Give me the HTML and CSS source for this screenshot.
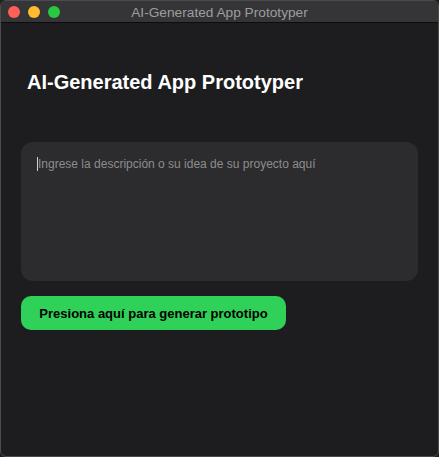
FILE: index.html
```html
<!DOCTYPE html>
<html>
<head>
<meta charset="utf-8">
<link rel="stylesheet" href="styles.css">
</head>
<body>
<div class="window">
  <div class="titlebar">
    <div class="lights">
      <span class="light red"></span>
      <span class="light yellow"></span>
      <span class="light green"></span>
    </div>
    <div class="title">AI-Generated App Prototyper</div>
  </div>
  <div class="content">
    <h1 class="heading">AI-Generated App Prototyper</h1>
    <div class="inputbox">
      <div class="placeholder"><span class="caret"></span>Ingrese la descripción o su idea de su proyecto aquí</div>
    </div>
    <button class="generate">Presiona aquí para generar prototipo</button>
  </div>
</div>
</body>
</html>
```
FILE: styles.css
```css
* { box-sizing: border-box; }
html, body { margin: 0; padding: 0; background: #1e1e1e; }
body { font-family: "Liberation Sans", Arial, sans-serif; }
.window {
  width: 439px;
  height: 457px;
  border: 1px solid #4b4b4d;
  border-radius: 6px;
  overflow: hidden;
  background: #1d1d1f;
  display: flex;
  flex-direction: column;
}
.titlebar {
  height: 22px;
  flex: none;
  background: #353537;
  border-bottom: 1px solid #0c0c0c;
  position: relative;
  display: flex;
  align-items: center;
}
.lights {
  display: flex;
  gap: 8px;
  padding-left: 7px;
}
.light { width: 12px; height: 12px; border-radius: 50%; display: block; }
.red { background: #fe5f57; }
.yellow { background: #febc2e; }
.green { background: #28c840; }
.title {
  position: absolute;
  left: 0; right: 0; top: 0; bottom: 0;
  display: flex; align-items: center; justify-content: center;
  color: #9d9d9f;
  font-size: 13.7px;
  padding-top: 1px;
}
.content {
  flex: 1;
  padding: 0 20px 0 20px;
  display: flex;
  flex-direction: column;
  align-items: flex-start;
}
.heading {
  margin: 47px 0 0 6px;
  font-size: 20px;
  font-weight: bold;
  color: #ffffff;
  line-height: 24px;
}
.inputbox {
  margin-top: 48px;
  width: 397px;
  height: 139px;
  background: #2c2c2e;
  border-radius: 12px;
  padding: 15px 16px;
}
.placeholder {
  color: #8c8c8e;
  font-size: 12px;
  line-height: 14px;
  display: flex;
  align-items: center;
}
.caret { width: 1px; height: 14px; background: #d0d0d0; margin-right: 0; }
.generate {
  margin-top: 15px;
  width: 265px;
  height: 34px;
  border: none;
  border-radius: 10px;
  background: #30d158;
  color: #000;
  font-family: "Liberation Sans", Arial, sans-serif;
  font-weight: bold;
  font-size: 13px;
  padding: 0;
}
```
